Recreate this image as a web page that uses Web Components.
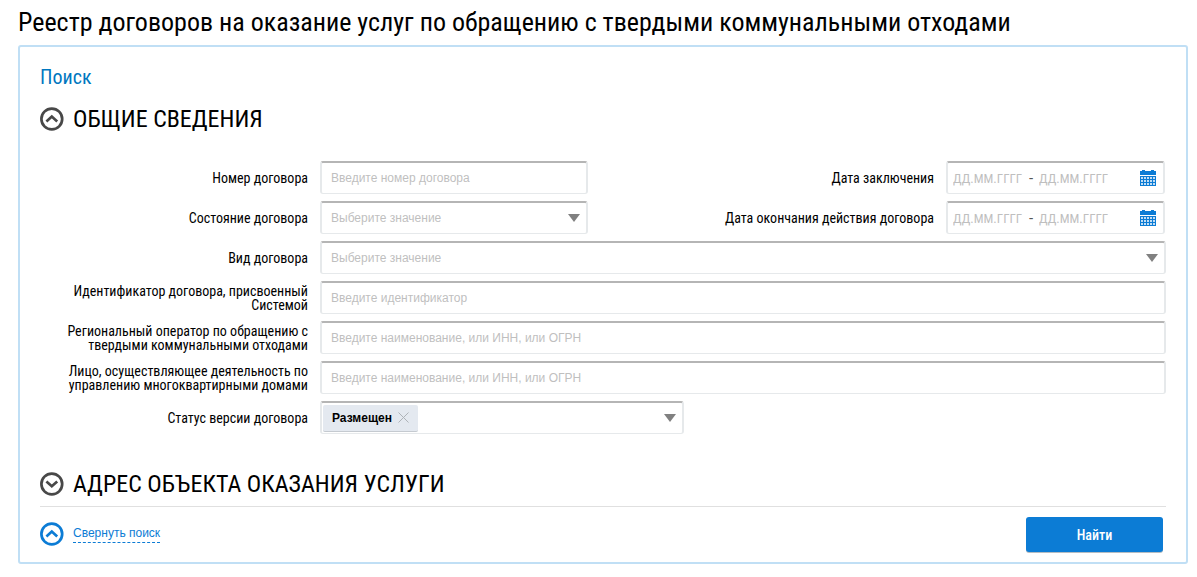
<!DOCTYPE html>
<html lang="ru">
<head>
<meta charset="utf-8">
<meta name="viewport" content="width=device-width, initial-scale=1">
<title>Реестр договоров на оказание услуг по обращению с ТКО</title>
<style>
    :root {
        --condensed: "Roboto Condensed", "Liberation Sans Narrow", Roboto, sans-serif;
        --plain: "Liberation Sans", Arial, sans-serif;
        --blue: #0c7cd5;
        --label-width: 268px;
    }
    body {
        margin: 0;
        padding: 6px 9px 12px 18px;
        background: #fff;
        color: #000;
        font-family: var(--condensed);
    }
    h1 {
        margin: 0 0 7px;
        font-size: 26px;
        line-height: 32px;
        font-weight: 400;
    }
    .pair {
        display: flex;
        justify-content: space-between;
        padding-right: 1px;
    }
</style>
</head>
<body>
<h1>Реестр договоров на оказание услуг по обращению с твердыми коммунальными отходами</h1>
<search-panel heading="Поиск">
    <form-section heading="ОБЩИЕ СВЕДЕНИЯ" open>
        <div class="pair">
            <text-field label="Номер договора" placeholder="Введите номер договора" style="--field-width: 268px"></text-field>
            <date-range label="Дата заключения"></date-range>
        </div>
        <div class="pair">
            <select-field label="Состояние договора" placeholder="Выберите значение" style="--field-width: 268px"></select-field>
            <date-range label="Дата окончания действия договора"></date-range>
        </div>
        <select-field label="Вид договора" placeholder="Выберите значение"></select-field>
        <text-field label="Идентификатор договора, присвоенный Системой" placeholder="Введите идентификатор"></text-field>
        <text-field label="Региональный оператор по обращению с твердыми коммунальными отходами" placeholder="Введите наименование, или ИНН, или ОГРН"></text-field>
        <text-field label="Лицо, осуществляющее деятельность по управлению многоквартирными домами" placeholder="Введите наименование, или ИНН, или ОГРН"></text-field>
        <select-field label="Статус версии договора" style="--field-width: 364px"><value-chip>Размещен</value-chip></select-field>
    </form-section>
    <form-section heading="АДРЕС ОБЪЕКТА ОКАЗАНИЯ УСЛУГИ"></form-section>
    <search-footer slot="footer">Свернуть поиск</search-footer>
</search-panel>

<script>
// Styles shared by every row with a label and a bordered box
const fieldStyles = `
    :host {
        display: flex;
        align-items: center;
        gap: 12px;
        height: 33px;
    }
    label, .label {
        flex: 0 0 var(--label-width);
        font: 14px/14px var(--condensed);
        text-align: right;
    }
    .box {
        box-sizing: border-box;
        display: flex;
        align-items: center;
        flex: 1 1 auto;
        max-width: var(--field-width, none);
        width: var(--field-width, auto);
        height: 33px;
        border: 2px solid #e6e9eb;
        border-top-color: #b5b5b5;
        border-bottom-width: 1px;
        border-radius: 3px;
        background: #fff;
    }
    input, select {
        box-sizing: border-box;
        flex: 1 1 auto;
        width: 100%;
        min-width: 0;
        height: 100%;
        margin: 0;
        padding: 0 9px;
        border: 0;
        outline: 0;
        background: transparent;
        color: #000;
        font: 12px/16px var(--plain);
    }
    input::placeholder {
        color: #bfbfbf;
        opacity: 1;
    }`;

const circleIcon = (down) => `
    <svg width="24" height="24" viewBox="0 0 24 24" fill="none" stroke="currentColor" stroke-width="2.7" aria-hidden="true">
        <circle cx="11.8" cy="12" r="10.4"/>
        <path d="${down ? "M6.4 9.4 11.8 14.2 17.2 9.4" : "M6.4 14.4 11.8 9.6 17.2 14.4"}"/>
    </svg>`;

class SearchPanel extends HTMLElement {
    constructor() {
        super();
        this.attachShadow({ mode: "open" });
        this.shadowRoot.innerHTML = `
            <style>
                :host {
                    display: block;
                    padding: 18px 20px 10px;
                    border: 2px solid #c0dff5;
                    border-radius: 3px;
                }
                h2 {
                    margin: 0 0 16px;
                    color: #0077c0;
                    font-size: 20px;
                    line-height: 24px;
                    font-weight: 400;
                }
                form {
                    display: flex;
                    flex-direction: column;
                    gap: 36px;
                }
                .footer {
                    margin-top: 8px;
                    padding-top: 10px;
                    border-top: 1px solid #e0e0e0;
                }
            </style>
            <h2></h2>
            <form><slot></slot></form>
            <div class="footer"><slot name="footer"></slot></div>`;
    }

    connectedCallback() {
        this.shadowRoot.querySelector("h2").textContent = this.getAttribute("heading");
    }
}

class FormSection extends HTMLElement {
    constructor() {
        super();
        this.attachShadow({ mode: "open" });
    }

    connectedCallback() {
        this._render();
    }

    _render() {
        const open = this.hasAttribute("open");
        this.shadowRoot.innerHTML = `
            <style>
                :host {
                    display: block;
                }
                h3 {
                    margin: 0;
                    font-size: 24px;
                    line-height: 28px;
                    font-weight: 400;
                }
                button {
                    display: flex;
                    align-items: center;
                    gap: 9px;
                    padding: 0;
                    border: 0;
                    background: none;
                    color: #000;
                    font: inherit;
                    cursor: pointer;
                }
                svg {
                    color: #484848;
                }
                .rows {
                    display: flex;
                    flex-direction: column;
                    gap: 7px;
                    margin-top: 28px;
                }
                .rows[hidden] {
                    display: none;
                }
            </style>
            <h3><button type="button" aria-expanded="${open}">${circleIcon(!open)}<span>${this.getAttribute("heading")}</span></button></h3>
            <div class="rows" ${open ? "" : "hidden"}><slot></slot></div>`;
        this.shadowRoot.querySelector("button").addEventListener("click", this._toggle.bind(this));
    }

    _toggle() {
        this.toggleAttribute("open");
        this._render();
    }
}

class TextField extends HTMLElement {
    constructor() {
        super();
        this.attachShadow({ mode: "open" });
    }

    connectedCallback() {
        this.shadowRoot.innerHTML = `
            <style>${fieldStyles}</style>
            <label for="input">${this.getAttribute("label")}</label>
            <div class="box"><input id="input" type="text" placeholder="${this.getAttribute("placeholder")}"></div>`;
    }
}

class SelectField extends HTMLElement {
    constructor() {
        super();
        this.attachShadow({ mode: "open" });
    }

    connectedCallback() {
        this.shadowRoot.innerHTML = `
            <style>
                ${fieldStyles}
                select {
                    appearance: none;
                    color: #bfbfbf;
                }
                svg {
                    flex: none;
                    margin-right: 6px;
                }
            </style>
            <label for="select">${this.getAttribute("label")}</label>
            <div class="box">
                <slot></slot>
                <select id="select"><option>${this.getAttribute("placeholder") || ""}</option></select>
                <svg width="12" height="8" viewBox="0 0 12 8" aria-hidden="true"><path d="M0 0H12L6 8Z" fill="#808080"/></svg>
            </div>`;
    }
}

class DateRange extends HTMLElement {
    constructor() {
        super();
        this.attachShadow({ mode: "open" });
    }

    connectedCallback() {
        const label = this.getAttribute("label");
        this.shadowRoot.innerHTML = `
            <style>
                ${fieldStyles}
                .label {
                    flex-basis: auto;
                }
                .box {
                    width: 219px;
                    padding: 0 7px 0 5px;
                }
                input {
                    flex: 0 0 70px;
                    padding: 0;
                    font: 13px/16px var(--condensed);
                }
                .dash {
                    flex: 0 0 16px;
                    color: #555;
                    font: 14px/16px var(--plain);
                    text-align: center;
                }
                button {
                    display: flex;
                    margin-left: auto;
                    padding: 0;
                    border: 0;
                    background: none;
                    color: var(--blue);
                }
            </style>
            <label class="label" for="from">${label}</label>
            <div class="box">
                <input id="from" type="text" placeholder="ДД.ММ.ГГГГ">
                <span class="dash">-</span>
                <input type="text" placeholder="ДД.ММ.ГГГГ" aria-label="${label}, по">
                <button type="button" aria-label="Открыть календарь">
                    <svg width="16" height="16" viewBox="0 0 16 16" aria-hidden="true">
                        <path fill="currentColor" d="M2 0H5V1H11V0H14V1H16V5H0V1H2ZM0 6H16V16H0Z"/>
                        <path stroke="#fff" stroke-opacity=".75" stroke-width="2" stroke-dasharray="2 1" d="M1 8H15M1 11H15M1 14H15"/>
                    </svg>
                </button>
            </div>`;
    }
}

class ValueChip extends HTMLElement {
    constructor() {
        super();
        this.attachShadow({ mode: "open" });
        this.shadowRoot.innerHTML = `
            <style>
                :host {
                    box-sizing: border-box;
                    display: flex;
                    flex: none;
                    align-items: center;
                    gap: 6px;
                    height: 27px;
                    margin-left: 1px;
                    padding: 0 9px;
                    border-bottom: 1px solid #c5cad0;
                    border-radius: 2px;
                    background: #e4e9f0;
                    font: bold 12px/16px var(--plain);
                }
                button {
                    display: flex;
                    padding: 0;
                    border: 0;
                    background: none;
                }
            </style>
            <slot></slot>
            <button type="button" aria-label="Удалить">
                <svg width="11" height="11" viewBox="0 0 11 11" fill="none" stroke="#aeb3b8" aria-hidden="true"><path d="M.5.5 10.5 10.5M10.5.5.5 10.5"/></svg>
            </button>`;
    }
}

class SearchFooter extends HTMLElement {
    constructor() {
        super();
        this.attachShadow({ mode: "open" });
        this.shadowRoot.innerHTML = `
            <style>
                :host {
                    display: flex;
                    align-items: center;
                    justify-content: space-between;
                    padding-right: 3px;
                }
                a {
                    display: flex;
                    align-items: center;
                    gap: 9px;
                    padding-bottom: 2px;
                    color: var(--blue);
                    font: 12px/16px var(--plain);
                    text-decoration: none;
                }
                a span {
                    padding-bottom: 1px;
                    border-bottom: 1px dashed;
                }
                button {
                    width: 137px;
                    height: 35px;
                    padding: 0;
                    border: 0;
                    border-radius: 3px;
                    background: var(--blue);
                    box-shadow: 0 1px 0 #b5bcc2;
                    color: #fff;
                    font: 500 14px/20px var(--condensed);
                }
            </style>
            <a href="#">${circleIcon(false)}<span><slot></slot></span></a>
            <button type="submit">Найти</button>`;
    }
}

customElements.define("search-panel", SearchPanel);
customElements.define("form-section", FormSection);
customElements.define("text-field", TextField);
customElements.define("select-field", SelectField);
customElements.define("date-range", DateRange);
customElements.define("value-chip", ValueChip);
customElements.define("search-footer", SearchFooter);
</script>
</body>
</html>
